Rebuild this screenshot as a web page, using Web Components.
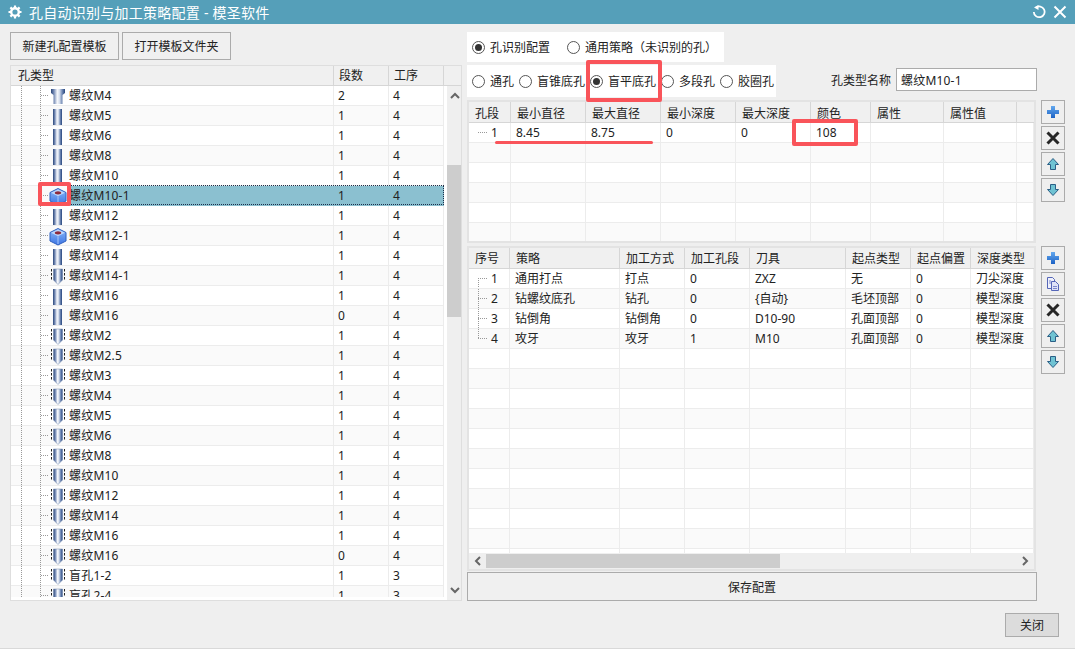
<!DOCTYPE html>
<html lang="zh">
<head>
<meta charset="utf-8">
<title>孔自动识别与加工策略配置</title>
<style>
  html, body { margin: 0; height: 100%; overflow: hidden; background: #efefef; }
  body { font: 12px "Noto Sans", "Noto Sans CJK SC", sans-serif; color: #222; }
</style>
</head>
<body>
<app-window></app-window>

<script>
const FONT = '"Noto Sans", "Noto Sans CJK SC", sans-serif';

class PushButton extends HTMLElement {
  constructor() {
    super();
    this.attachShadow({ mode: 'open' });
    this.shadowRoot.innerHTML = `
      <style>
        :host { display: flex; align-items: center; justify-content: center; box-sizing: border-box;
                background: #f0f0f0; border: 1px solid #ababab; font: 12px ${FONT}; color: #222; }
        :host([dark]) { background: #dcdcdc; }
      </style>
      <slot></slot>`;
  }
}
customElements.define('push-button', PushButton);

class RadioOption extends HTMLElement {
  constructor() {
    super();
    this.attachShadow({ mode: 'open' });
    this.shadowRoot.innerHTML = `
      <style>
        :host { display: inline-flex; align-items: center; gap: 5px; font: 12px ${FONT}; color: #222; white-space: nowrap; }
        svg { width: 13px; height: 13px; flex: none; }
        circle.dot { display: none; }
        :host([checked]) circle.dot { display: block; }
      </style>
      <svg viewBox="0 0 13 13">
        <circle cx="6.5" cy="6.5" r="6" fill="#fff" stroke="#555"/>
        <circle class="dot" cx="6.5" cy="6.5" r="3.5" fill="#333"/>
      </svg>
      <slot></slot>`;
  }
}
customElements.define('radio-option', RadioOption);

class TextField extends HTMLElement {
  constructor() {
    super();
    this.attachShadow({ mode: 'open' });
    this.shadowRoot.innerHTML = `
      <style>
        :host { display: flex; align-items: center; box-sizing: border-box; background: #fff;
                border: 1px solid #ababab; padding-left: 4px; font: 12px ${FONT}; color: #222; letter-spacing: .2px; }
      </style>
      <slot></slot>`;
  }
}
customElements.define('text-field', TextField);

const TOOL_ICONS = {
  plus: `<defs><linearGradient id="g" x1="0" y1="0" x2="0" y2="1"><stop offset="0" stop-color="#63a8ee"/><stop offset="1" stop-color="#1c62c4"/></linearGradient></defs>
         <path d="M10 6h4v4h4v4h-4v4h-4v-4H6v-4h4z" fill="url(#g)"/>`,
  cross: `<path d="M6.5 6.5l11 11M17.500 6.500l-11 11" stroke="#262626" stroke-width="3" fill="none"/>`,
  up: `<path d="M12 6.500l5.500 6h-3v5h-5v-5h-3z" fill="#6fc3d3" stroke="#2b5f86"/>`,
  down: `<path d="M12 17.500l5.500-6h-3v-5h-5v5h-3z" fill="#6fc3d3" stroke="#2b5f86"/>`,
  copy: `<path d="M6.500 5.500h5l2 2v9h-7z" fill="#eef0fb" stroke="#5566b8"/>
         <path d="M10.500 9.500h4l3 3v6h-7z" fill="#dfe3f8" stroke="#5566b8"/>
         <path d="M12 14.500h4M12 16.500h4M8 9h2M8 11h2" stroke="#7d88cc"/>`
};

class ToolButton extends HTMLElement {
  constructor() {
    super();
    this.attachShadow({ mode: 'open' });
    this.shadowRoot.innerHTML = `
      <style>
        :host { display: block; box-sizing: border-box; width: 24px; height: 24px; background: #efefef; border: 1px solid #ababab; }
        svg { display: block; width: 24px; height: 24px; margin: -1px; }
      </style>
      <svg viewBox="0 0 24 24">${TOOL_ICONS[this.getAttribute('icon')]}</svg>`;
  }
}
customElements.define('tool-button', ToolButton);

const GRAD = `<defs><linearGradient id="m" x1="0" y1="0" x2="1" y2="0">
  <stop offset="0" stop-color="#2a4679"/><stop offset=".2" stop-color="#7389b4"/>
  <stop offset=".45" stop-color="#f6f8fc"/><stop offset=".6" stop-color="#d8e0ee"/>
  <stop offset=".8" stop-color="#6f88b4"/><stop offset="1" stop-color="#26447c"/></linearGradient></defs>`;

const HOLE_ICONS = {
  bolt: `${GRAD}<rect x="2" y="3" width="14" height="4" fill="url(#m)"/>
         <path d="M2 7h14l-2.500 2v9h-9V9z" fill="url(#m)"/>`,
  cyl: `${GRAD}<rect x="4" y="3" width="9" height="16" fill="url(#m)"/>`,
  blind: `${GRAD}<path d="M4.500 3h9v11l-4.500 4.500-4.500-4.500z" fill="url(#m)" stroke="#6d84aa" stroke-width=".5"/>
          <path d="M2.500 3v12M15.500 3v12" stroke="#222" stroke-dasharray="2.500 1.500" fill="none"/>`,
  cube: `<defs><linearGradient id="c" x1="0" y1="0" x2="0" y2="1"><stop offset="0" stop-color="#8dbaf8"/><stop offset="1" stop-color="#3c74e4"/></linearGradient></defs>
         <path d="M9 2.500l8 4v8.500l-8 4-8-4V6.500z" fill="url(#c)" stroke="#2f60c0"/>
         <path d="M9 3.500l7 3.300-7 3.500-7-3.500z" fill="#bcd6fc"/>
         <ellipse cx="9" cy="6.800" rx="3.200" ry="1.600" fill="#8d2a3c"/>
         <path d="M9 10.300V18" stroke="#a8c8fa"/>`
};

class HoleIcon extends HTMLElement {
  constructor() {
    super();
    this.attachShadow({ mode: 'open' });
    this.shadowRoot.innerHTML = `
      <style>
        :host { display: block; width: 18px; height: 20px; }
        svg { display: block; width: 18px; height: 20px; }
      </style>
      <svg viewBox="0 0 18 20">${HOLE_ICONS[this.getAttribute('kind')]}</svg>`;
  }
}
customElements.define('hole-icon', HoleIcon);

class ScrollBar extends HTMLElement {
  constructor() {
    super();
    this.attachShadow({ mode: 'open' });
    const horizontal = this.hasAttribute('horizontal');
    const chev = (d) => `<svg viewBox="0 0 16 16"><path d="${d}" fill="none" stroke="#666" stroke-width="2"/></svg>`;
    this.shadowRoot.innerHTML = `
      <style>
        :host { display: flex; flex-direction: ${horizontal ? 'row' : 'column'}; background: #efefef; flex: none; overflow: hidden; }
        svg { display: block; width: 16px; height: 16px; flex: none; }
        .end { flex: none; display: flex; align-items: center; justify-content: center; }
        .track { flex: 1; display: flex; flex-direction: inherit; }
        .thumb { background: #cdcdcd; flex: none; }
      </style>
      <div class="end" style="${horizontal ? 'width:17px' : 'height:20px'}">${chev(horizontal ? 'M10 4L6 8l4 4' : 'M4 10l4-4 4 4')}</div>
      <div class="track"><div class="thumb" style="${this.getAttribute('thumb')}"></div></div>
      <div class="end" style="${horizontal ? 'width:18px' : 'height:20px'}">${chev(horizontal ? 'M6 4l4 4-4 4' : 'M4 6l4 4 4-4')}</div>`;
  }
}
customElements.define('scroll-bar', ScrollBar);

class DataGrid extends HTMLElement {
  constructor() {
    super();
    this.attachShadow({ mode: 'open' });
  }
  set config({ cols, heads, rows, blank, tree, scroll, headLine }) {
    const tpl = cols.map((c) => c + 'px').join(' ');
    const head = heads.map((h) => `<div class="hc">${h}</div>`).join('');
    let body = '';
    for (let i = 0; i < rows.length + blank; i++) {
      const row = rows[i];
      let cells = '';
      for (let j = 0; j < cols.length; j++) {
        let cls = 'c';
        if (row && j === 0) {
          cls += ' lead';
          if (tree) cls += i === 0 ? ' first' : i === rows.length - 1 ? ' last' : ' mid';
        }
        cells += `<div class="${cls}">${row && row[j] !== undefined ? row[j] : ''}</div>`;
      }
      body += `<div class="r">${cells}</div>`;
    }
    this.shadowRoot.innerHTML = `
      <style>
        :host { display: flex; flex-direction: column; box-sizing: border-box; border: 2px solid #e3e3e3; background: #fff;
                font: 12px ${FONT}; color: #222; overflow: hidden; }
        .h, .r { display: grid; grid-template-columns: ${tpl}; flex: none; }
        .h { background: #f0f0f0; height: 21px; border-bottom: 1px solid #d6d6d6; box-sizing: border-box; }
        .hc { padding-left: 6px; line-height: ${headLine}px; border-right: 1px solid #d6d6d6; white-space: nowrap; overflow: hidden; }
        .hc:last-child { border-right: 0; }
        .body { flex: 1; overflow: hidden; min-height: 0; }
        .r { height: 20px; box-sizing: border-box; border-bottom: 1px solid #ececec; }
        .r:nth-child(even) { background: #fafafa; }
        .c { padding-left: 5px; line-height: 19px; border-right: 1px solid #ececec; white-space: nowrap; overflow: hidden; }
        .c.lead { padding-left: 22px; background:
          repeating-linear-gradient(90deg, #999 0 1px, transparent 1px 2px) 9px 9px / 10px 1px no-repeat; }
        .c.first, .c.mid, .c.last { background:
          repeating-linear-gradient(90deg, #999 0 1px, transparent 1px 2px) 9px 9px / 10px 1px no-repeat,
          repeating-linear-gradient(#999 0 1px, transparent 1px 2px) 9px 0 / 1px 100% no-repeat; }
        .c.first { background-position: 9px 9px, 9px 9px; background-size: 10px 1px, 1px 11px; }
        .c.last { background-size: 10px 1px, 1px 10px; }
      </style>
      <div class="h">${head}</div>
      <div class="body">${body}</div>
      ${scroll ? '<scroll-bar horizontal thumb="width:294px;height:14px;margin-top:1px" style="height:16px"></scroll-bar>' : ''}`;
  }
}
customElements.define('data-grid', DataGrid);

class HoleTree extends HTMLElement {
  constructor() {
    super();
    this.attachShadow({ mode: 'open' });
  }
  set rows(list) {
    const body = list.map(([kind, name, seg, op, sel]) => `
      <div class="r${sel ? ' sel' : ''}">
        <div class="gutter"><hole-icon kind="${kind}"></hole-icon></div>
        <div class="c name">${name}</div>
        <div class="c">${seg}</div>
        <div class="c">${op}</div>
      </div>`).join('');
    this.shadowRoot.innerHTML = `
      <style>
        :host { display: flex; flex-direction: column; box-sizing: border-box; border: 1px solid #dedede; background: #fff;
                font: 12px ${FONT}; color: #222; overflow: hidden; }
        .h { display: grid; grid-template-columns: 323px 55px 55px 1fr; height: 20px; box-sizing: border-box; background: #f0f0f0;
             border-bottom: 1px solid #d6d6d6; flex: none; }
        .hc { padding-left: 5px; line-height: 19px; border-right: 1px solid #d6d6d6; }
        .hc:first-child { padding-left: 7px; line-height: 20px; }
        .hc:last-child { border-right: 0; }
        .main { flex: 1; display: flex; min-height: 0; }
        .list { width: 436px; overflow: hidden; flex: none; padding-bottom: 3px; }
        .clip { height: 100%; overflow: hidden; }
        .r { position: relative; display: grid; grid-template-columns: 58px 265px 55px 55px; height: 20px; box-sizing: border-box;
             border-bottom: 1px solid #ececec; width: 433px; }
        .r:nth-child(even) { background: #fafafa; }
        .gutter { padding-left: 38px; background:
          repeating-linear-gradient(#999 0 1px, transparent 1px 2px) 10px 0 / 1px 100% no-repeat,
          repeating-linear-gradient(#999 0 1px, transparent 1px 2px) 29px 0 / 1px 100% no-repeat,
          repeating-linear-gradient(90deg, #999 0 1px, transparent 1px 2px) 30px 9px / 8px 1px no-repeat; }
        .c { padding-left: 4px; line-height: 19px; border-right: 1px solid #ececec; white-space: nowrap; }
        .name { padding-left: 0; letter-spacing: .2px; }
        .r.sel .c { background: #8bc0d0; border-right-color: #8bc0d0; }
        .r.sel::after { content: ""; position: absolute; inset: -1px 0 0 58px; border: 1px dotted #1c2f4a; }
        scroll-bar { width: 15px; }
      </style>
      <div class="h"><div class="hc">孔类型</div><div class="hc">段数</div><div class="hc">工序</div><div class="hc"></div></div>
      <div class="main">
        <div class="list"><div class="clip">${body}</div></div>
        <scroll-bar thumb="height:152px;margin-top:59px"></scroll-bar>
      </div>`;
  }
}
customElements.define('hole-tree', HoleTree);

class RedMark extends HTMLElement {
  constructor() {
    super();
    this.attachShadow({ mode: 'open' });
    this.shadowRoot.innerHTML = `
      <style>
        :host { position: absolute; display: block; box-sizing: border-box; border: 4px solid #f9545a; border-radius: 2px; pointer-events: none; }
        :host([line]) { border: 0; background: #f9545a; border-radius: 2px; }
      </style>`;
  }
}
customElements.define('red-mark', RedMark);

class TitleBar extends HTMLElement {
  constructor() {
    super();
    this.attachShadow({ mode: 'open' });
    this.shadowRoot.innerHTML = `
      <style>
        :host { display: flex; align-items: center; height: 24px; flex: none; background: #559fb9; color: #fff;
                font: 14px ${FONT}; padding: 0 8px; box-sizing: border-box; }
        .gear { width: 14px; height: 14px; margin-right: 7px; flex: none; }
        .text { flex: 1; white-space: nowrap; letter-spacing: .25px; }
        .act { display: block; width: 14px; height: 14px; margin-left: 7px; }
      </style>
      <svg class="gear" viewBox="0 0 14 14">
        <circle cx="7" cy="7" r="3.800" fill="none" stroke="#fff" stroke-width="2.400"/>
        <path d="M7 .500v2.500M7 11v2.500M.500 7H3M11 7h2.500M2.400 2.400l1.800 1.800M9.800 9.800l1.800 1.800M11.600 2.400L9.800 4.200M4.200 9.800l-1.800 1.800" stroke="#fff" stroke-width="2.200"/>
      </svg>
      <div class="text">孔自动识别与加工策略配置 - 模圣软件</div>
      <svg class="act" viewBox="0 0 14 14">
        <path d="M3.800 2.600A5.400 5.400 0 1 1 1.800 7" fill="none" stroke="#fff" stroke-width="1.800"/>
        <path d="M6.500 0v5L2 2.400z" fill="#fff"/>
      </svg>
      <svg class="act" viewBox="0 0 14 14"><path d="M1.500 1.500l11 11M12.500 1.500l-11 11" stroke="#fff" stroke-width="2"/></svg>`;
  }
}
customElements.define('title-bar', TitleBar);

class AppWindow extends HTMLElement {
  constructor() {
    super();
    this.attachShadow({ mode: 'open' });
    this.shadowRoot.innerHTML = `
      <style>
        :host { display: flex; flex-direction: column; position: relative; width: 1075px; height: 649px; box-sizing: border-box;
                border-bottom: 1px solid #d9d9d9; background: #efefef; font: 12px ${FONT}; color: #222; overflow: hidden; }
        .content { flex: 1; display: flex; flex-direction: column; padding: 8px 10px 0; min-height: 0; }
        .cols { display: flex; gap: 5px; height: 569px; flex: none; }
        .left { width: 452px; display: flex; flex-direction: column; gap: 5px; flex: none; }
        .btns { display: flex; gap: 3px; height: 28px; flex: none; }
        .btns push-button { width: 109px; }
        hole-tree { height: 536px; flex: none; }
        .right { width: 598px; display: flex; flex-direction: column; flex: none; }
        .card { display: flex; align-items: center; background: #fff; padding-left: 5px; box-sizing: border-box; flex: none; }
        .mode { width: 257px; height: 30px; gap: 17px; margin-bottom: 3px; }
        .kindrow { display: flex; align-items: center; height: 32px; margin-bottom: 3px; flex: none; }
        .kinds { width: 309px; height: 32px; gap: 5px; }
        .namelabel { margin: -3px 0 0 55px; width: 65px; white-space: nowrap; }
        text-field { width: 141px; height: 23px; margin-top: -3px; }
        .gridrow { display: flex; gap: 5px; flex: none; }
        .tools { display: flex; flex-direction: column; gap: 2px; flex: none; }
        .g1 { height: 143px; margin-bottom: 3px; }
        .g2 { height: 325px; margin-bottom: 1px; }
        data-grid { width: 569px; height: 100%; flex: none; }
        .save { width: 570px; height: 29px; flex: none; }
        .foot { display: flex; justify-content: flex-end; padding: 12px 6px 0 0; }
        .foot push-button { width: 54px; height: 24px; }
      </style>
      <title-bar></title-bar>
      <div class="content">
        <div class="cols">
          <div class="left">
            <div class="btns">
              <push-button>新建孔配置模板</push-button>
              <push-button>打开模板文件夹</push-button>
            </div>
            <hole-tree id="tree"></hole-tree>
          </div>
          <div class="right">
            <div class="card mode">
              <radio-option checked>孔识别配置</radio-option>
              <radio-option>通用策略（未识别的孔）</radio-option>
            </div>
            <div class="kindrow">
              <div class="card kinds">
                <radio-option>通孔</radio-option>
                <radio-option>盲锥底孔</radio-option>
                <radio-option checked>盲平底孔</radio-option>
                <radio-option>多段孔</radio-option>
                <radio-option>胶圈孔</radio-option>
              </div>
              <div class="namelabel">孔类型名称</div>
              <text-field>螺纹M10-1</text-field>
            </div>
            <div class="gridrow g1">
              <data-grid id="segments"></data-grid>
              <div class="tools">
                <tool-button icon="plus"></tool-button>
                <tool-button icon="cross"></tool-button>
                <tool-button icon="up"></tool-button>
                <tool-button icon="down"></tool-button>
              </div>
            </div>
            <div class="gridrow g2">
              <data-grid id="strategy"></data-grid>
              <div class="tools">
                <tool-button icon="plus"></tool-button>
                <tool-button icon="copy"></tool-button>
                <tool-button icon="cross"></tool-button>
                <tool-button icon="up"></tool-button>
                <tool-button icon="down"></tool-button>
              </div>
            </div>
            <push-button class="save">保存配置</push-button>
          </div>
        </div>
        <div class="foot"><push-button dark>关闭</push-button></div>
      </div>
      <red-mark style="left:38px;top:182px;width:33px;height:24px"></red-mark>
      <red-mark style="left:586px;top:60px;width:76px;height:42px"></red-mark>
      <red-mark style="left:792px;top:119px;width:66px;height:27px"></red-mark>
      <red-mark line style="left:495px;top:141px;width:158px;height:3px"></red-mark>`;

    const root = this.shadowRoot;
    root.getElementById('tree').rows = [
      ['bolt', '螺纹M4', 2, 4], ['cyl', '螺纹M5', 1, 4], ['cyl', '螺纹M6', 1, 4], ['cyl', '螺纹M8', 1, 4],
      ['cyl', '螺纹M10', 1, 4], ['cube', '螺纹M10-1', 1, 4, true], ['cyl', '螺纹M12', 1, 4], ['cube', '螺纹M12-1', 1, 4],
      ['cyl', '螺纹M14', 1, 4], ['blind', '螺纹M14-1', 1, 4], ['cyl', '螺纹M16', 1, 4], ['cyl', '螺纹M16', 0, 4],
      ['blind', '螺纹M2', 1, 4], ['blind', '螺纹M2.5', 1, 4], ['blind', '螺纹M3', 1, 4], ['blind', '螺纹M4', 1, 4],
      ['blind', '螺纹M5', 1, 4], ['blind', '螺纹M6', 1, 4], ['blind', '螺纹M8', 1, 4], ['blind', '螺纹M10', 1, 4],
      ['blind', '螺纹M12', 1, 4], ['blind', '螺纹M14', 1, 4], ['blind', '螺纹M16', 1, 4], ['blind', '螺纹M16', 0, 4],
      ['blind', '盲孔1-2', 1, 3], ['blind', '盲孔2-4', 1, 3]
    ];
    root.getElementById('segments').config = {
      cols: [42, 75, 75, 75, 75, 60, 73, 73, 17],
      heads: ['孔段', '最小直径', '最大直径', '最小深度', '最大深度', '颜色', '属性', '属性值', ''],
      rows: [[1, '8.45', '8.75', 0, 0, 108]],
      blank: 6,
      headLine: 23
    };
    root.getElementById('strategy').config = {
      cols: [41, 110, 65, 65, 96, 65, 60, 63],
      heads: ['序号', '策略', '加工方式', '加工孔段', '刀具', '起点类型', '起点偏置', '深度类型'],
      rows: [
        [1, '通用打点', '打点', 0, 'ZXZ', '无', 0, '刀尖深度'],
        [2, '钻螺纹底孔', '钻孔', 0, '{自动}', '毛坯顶部', 0, '模型深度'],
        [3, '钻倒角', '钻倒角', 0, 'D10-90', '孔面顶部', 0, '模型深度'],
        [4, '攻牙', '攻牙', 1, 'M10', '孔面顶部', 0, '模型深度']
      ],
      blank: 11,
      tree: true,
      scroll: true,
      headLine: 21
    };
  }
}
customElements.define('app-window', AppWindow);
</script>
</body>
</html>
